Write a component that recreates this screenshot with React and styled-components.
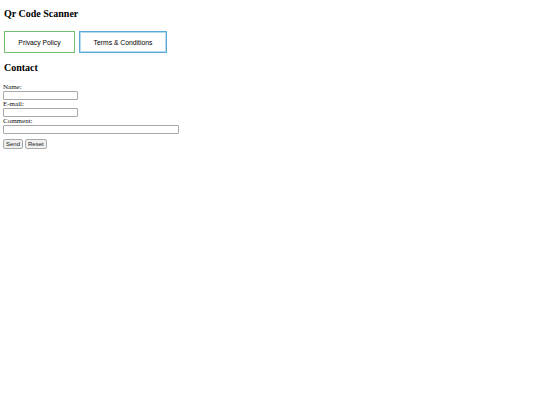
import React from "react";
import styled, { createGlobalStyle } from "styled-components";

const Global = createGlobalStyle`
  body {
    margin: 0;
    padding: 0 3px;
    font-family: "Liberation Serif", "Times New Roman", serif;
    background: #fff;
    color: #000;
  }
`;

const Title = styled.h1`
  font-size: 10px;
  font-weight: bold;
  margin: 8px 0 0 1px;
  line-height: 12px;
`;

const Links = styled.div`
  display: flex;
  gap: 4px;
  margin: 11px 0 0 1px;
`;

const LinkBox = styled.a`
  display: flex;
  align-items: center;
  justify-content: center;
  box-sizing: border-box;
  width: ${(p) => p.$w}px;
  height: 22px;
  border: 1px solid ${(p) => p.$color};
  box-shadow: inset 0 0 0 1px ${(p) => p.$inner};
  font-family: "Liberation Sans", Arial, sans-serif;
  font-size: 6.8px;
  color: #000;
  text-decoration: none;
`;

const Heading = styled.h2`
  font-size: 10px;
  font-weight: bold;
  margin: 9px 0 9px 1px;
  line-height: 12px;
`;

const Form = styled.form`
  display: flex;
  flex-direction: column;
  align-items: flex-start;
`;

const Label = styled.label`
  font-size: 7px;
  line-height: 8px;
  color: #111;
`;

const Input = styled.input`
  box-sizing: border-box;
  width: ${(p) => p.$w}px;
  height: 9px;
  margin: 0;
  padding: 0;
  border: 1px solid #a8a8a8;
  border-radius: 1px;
  background: #fff;
`;

const Actions = styled.div`
  display: flex;
  gap: 2px;
  margin-top: 5px;
`;

const Btn = styled.button`
  box-sizing: border-box;
  height: 10px;
  padding: 0 2px;
  font-family: "Liberation Sans", Arial, sans-serif;
  font-size: 6px;
  line-height: 8px;
  background: #efefef;
  border: 1px solid #aaa;
  border-radius: 2px;
  color: #222;
`;

export default function App() {
  return (
    <>
      <Global />
      <Title>Qr Code Scanner</Title>
      <Links>
        <LinkBox href="#" $w={71} $color="#72bf72" $inner="transparent">Privacy Policy</LinkBox>
        <LinkBox href="#" $w={88} $color="#5aa9d6" $inner="#b4dcee">Terms &amp; Conditions</LinkBox>
      </Links>
      <Heading>Contact</Heading>
      <Form onSubmit={(e) => e.preventDefault()}>
        <Label>Name:</Label>
        <Input type="text" $w={75} />
        <Label>E-mail:</Label>
        <Input type="text" $w={75} />
        <Label>Comment:</Label>
        <Input type="text" $w={176} />
        <Actions>
          <Btn type="submit">Send</Btn>
          <Btn type="reset">Reset</Btn>
        </Actions>
      </Form>
    </>
  );
}
